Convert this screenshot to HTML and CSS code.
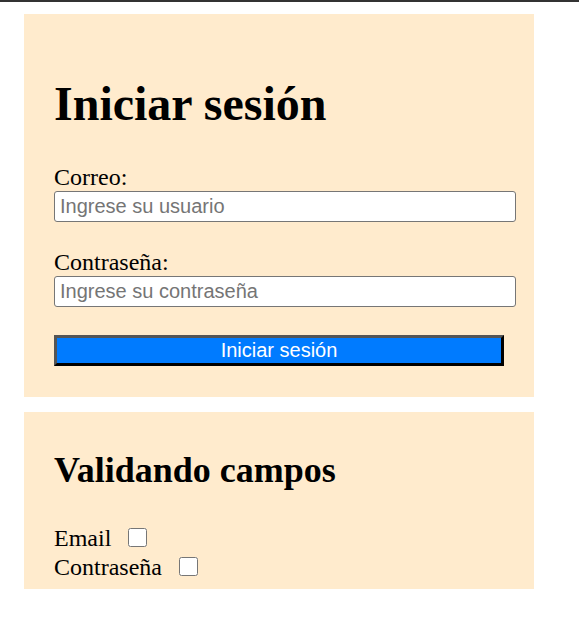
FILE: index.html
```html
<!DOCTYPE html>
<html lang="es">
<head>
<meta charset="utf-8">
<title>Iniciar sesión</title>
<link rel="stylesheet" href="styles.css">
</head>
<body>
<div class="topbar"></div>
<main class="page">
  <section class="card card-login">
    <h1 class="title">Iniciar sesión</h1>
    <form class="form">
      <div class="field">
        <label class="label" for="correo">Correo:</label>
        <input class="input" id="correo" type="text" placeholder="Ingrese su usuario">
      </div>
      <div class="field">
        <label class="label" for="pass">Contraseña:</label>
        <input class="input" id="pass" type="password" placeholder="Ingrese su contraseña">
      </div>
      <button class="btn" type="button">Iniciar sesión</button>
    </form>
  </section>
  <section class="card card-check">
    <h2 class="subtitle">Validando campos</h2>
    <div class="check-row"><span>Email</span><input class="check" type="checkbox"></div>
    <div class="check-row"><span>Contraseña</span><input class="check" type="checkbox"></div>
  </section>
</main>
</body>
</html>
```

FILE: styles.css
```css
html, body {
  margin: 0;
  padding: 0;
  background: #ffffff;
}

body {
  font-family: "Liberation Serif", "Times New Roman", serif;
  font-size: 24px;
  color: #000;
}

.topbar {
  height: 2px;
  background: #333333;
}

.page {
  padding: 12px 24px 0 24px;
  width: 510px;
}

.card {
  background: #ffebcd;
  padding: 30px 30px 31px 30px;
}

.card-check {
  margin-top: 15px;
  padding: 8px 30px 8px 30px;
}

.title {
  font-size: 48px;
  font-weight: bold;
  margin: 32px 0 32px 0;
  line-height: 55px;
}

.subtitle {
  font-size: 36px;
  font-weight: bold;
  margin: 30px 0 32px 0;
  line-height: 41px;
}

.form {
  margin: 0;
}

.field {
  margin-bottom: 26px;
}

.field:nth-child(2) {
  margin-bottom: 28px;
}

.label {
  display: block;
  line-height: 28px;
}

.input {
  display: block;
  width: 100%;
  box-sizing: content-box;
  height: 23px;
  padding: 3px 5px;
  margin: 0;
  border: 1px solid #767676;
  border-radius: 3px;
  background: #fff;
  font-family: "Liberation Sans", Arial, sans-serif;
  font-size: 20px;
  line-height: 23px;
  color: #000;
}

.input::placeholder {
  color: #757575;
}

.btn {
  display: block;
  width: 100%;
  height: 31px;
  box-sizing: border-box;
  margin: 0;
  padding: 1px 6px;
  border-width: 3px;
  border-style: solid;
  border-color: #555555 #000000 #000000 #555555;
  background: #007bff;
  color: #ffffff;
  font-family: "Liberation Sans", Arial, sans-serif;
  font-size: 20px;
  line-height: 23px;
}

.check-row {
  display: flex;
  align-items: center;
  height: 29px;
  line-height: 28px;
}

.check {
  width: 19px;
  height: 19px;
  margin: 0 0 0 17px;
}
```
